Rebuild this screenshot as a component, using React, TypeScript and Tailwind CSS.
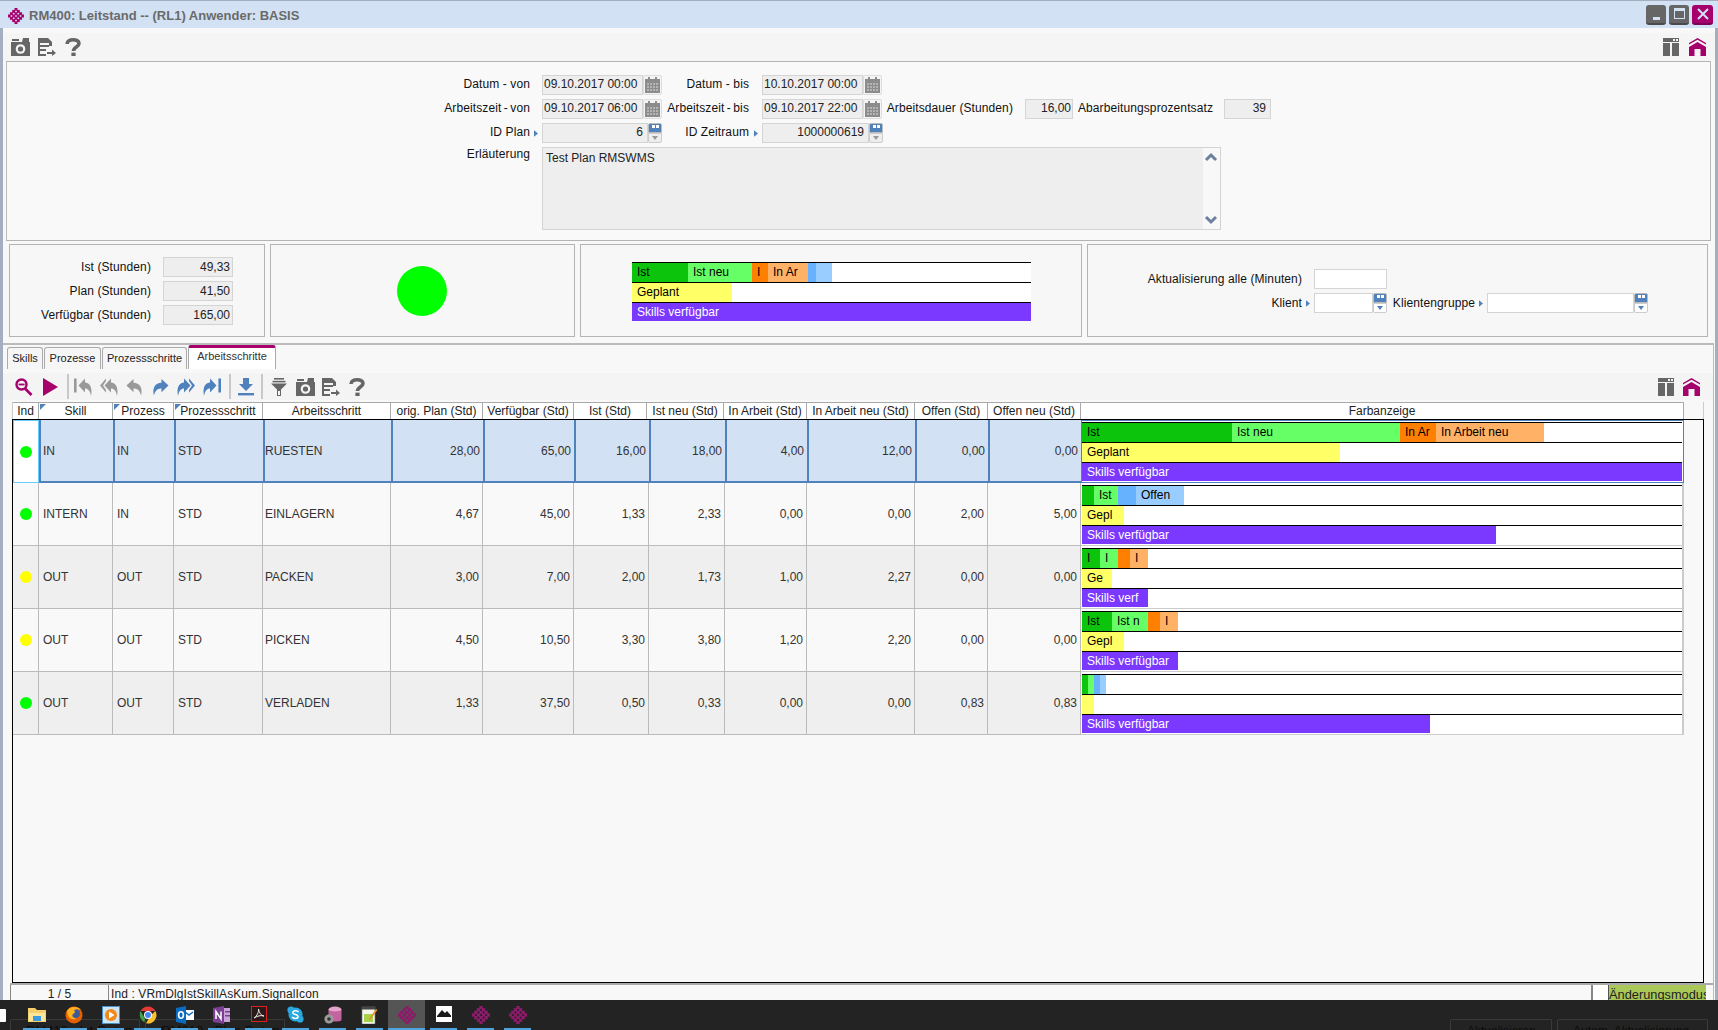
import type { ReactNode } from "react"

const IST = "bg-[#0cc40c]"
const NEU = "bg-[#66ff66]"
const ARB = "bg-[#ff8000]"
const ARBN = "bg-[#ffb266]"
const OFF = "bg-[#66b2ff]"
const OFFN = "bg-[#99ccff]"
const PLAN = "bg-[#ffff66]"

type Seg = [number, string, string]
type Bars = { top: Seg[]; plan: [number, string]; skills: [number, string] }

const panelBars: Bars = {
  top: [[56, IST, "Ist"], [64, NEU, "Ist neu"], [16, ARB, "I"], [40, ARBN, "In Ar"], [8, OFF, ""], [16, OFFN, ""]],
  plan: [100, "Geplant"],
  skills: [399, "Skills verfügbar"],
}

const rows: { color: string; cells: string[]; bars: Bars }[] = [
  {
    color: "bg-[#00ff00]",
    cells: ["IN", "IN", "STD", "RUESTEN", "28,00", "65,00", "16,00", "18,00", "4,00", "12,00", "0,00", "0,00"],
    bars: {
      top: [[150, IST, "Ist"], [168, NEU, "Ist neu"], [36, ARB, "In Ar"], [108, ARBN, "In Arbeit neu"]],
      plan: [258, "Geplant"],
      skills: [600, "Skills verfügbar"],
    },
  },
  {
    color: "bg-[#00ff00]",
    cells: ["INTERN", "IN", "STD", "EINLAGERN", "4,67", "45,00", "1,33", "2,33", "0,00", "0,00", "2,00", "5,00"],
    bars: {
      top: [[12, IST, ""], [24, NEU, "Ist"], [18, OFF, ""], [48, OFFN, "Offen"]],
      plan: [42, "Gepl"],
      skills: [414, "Skills verfügbar"],
    },
  },
  {
    color: "bg-[#ffff00]",
    cells: ["OUT", "OUT", "STD", "PACKEN", "3,00", "7,00", "2,00", "1,73", "1,00", "2,27", "0,00", "0,00"],
    bars: {
      top: [[18, IST, "I"], [18, NEU, "I"], [12, ARB, ""], [18, ARBN, "I"]],
      plan: [30, "Ge"],
      skills: [66, "Skills verf"],
    },
  },
  {
    color: "bg-[#ffff00]",
    cells: ["OUT", "OUT", "STD", "PICKEN", "4,50", "10,50", "3,30", "3,80", "1,20", "2,20", "0,00", "0,00"],
    bars: {
      top: [[30, IST, "Ist"], [36, NEU, "Ist n"], [12, ARB, ""], [18, ARBN, "I"]],
      plan: [42, "Gepl"],
      skills: [96, "Skills verfügbar"],
    },
  },
  {
    color: "bg-[#00ff00]",
    cells: ["OUT", "OUT", "STD", "VERLADEN", "1,33", "37,50", "0,50", "0,33", "0,00", "0,00", "0,83", "0,83"],
    bars: {
      top: [[6, IST, ""], [6, NEU, ""], [6, OFF, ""], [6, OFFN, ""]],
      plan: [12, ""],
      skills: [348, "Skills verfügbar"],
    },
  },
]

const headers: [string, boolean][] = [
  ["Ind", false], ["Skill", true], ["Prozess", true], ["Prozessschritt", true], ["Arbeitsschritt", false],
  ["orig. Plan (Std)", false], ["Verfügbar (Std)", false], ["Ist (Std)", false], ["Ist neu (Std)", false],
  ["In Arbeit (Std)", false], ["In Arbeit neu (Std)", false], ["Offen (Std)", false], ["Offen neu (Std)", false],
  ["Farbanzeige", false],
]

const HEAD_GRID = "grid grid-cols-[26px_74px_61px_89px_128px_92px_91px_73px_77px_83px_108px_73px_93px_603px]"
const ROW_GRID = "grid grid-cols-[26px_74px_61px_89px_128px_92px_91px_75px_76px_82px_108px_73px_93px_603px]"

function Segment({ w, color, label, white }: { w: number; color: string; label: string; white?: boolean }) {
  return (
    <div
      className={`${color} h-full overflow-hidden whitespace-nowrap pl-[5px] text-[12px] leading-[19px] ${white ? "text-white" : "text-black"}`}
      style={{ width: w }}
    >
      {label}
    </div>
  )
}

function Chart({ bars }: { bars: Bars }) {
  return (
    <div className="w-full bg-white">
      <div className="flex h-5 border-t border-black">
        {bars.top.map((s, i) => (
          <Segment key={i} w={s[0]} color={s[1]} label={s[2]} />
        ))}
      </div>
      <div className="flex h-5 border-t border-black">
        <Segment w={bars.plan[0]} color={PLAN} label={bars.plan[1]} />
      </div>
      <div className="flex h-[19px] border-t border-black">
        <Segment w={bars.skills[0]} color="bg-[#7b38ff]" label={bars.skills[1]} white />
      </div>
    </div>
  )
}

function Marker() {
  return (
    <svg width="4" height="7" viewBox="0 0 5 8" className="mt-[7px] shrink-0">
      <path d="M0 0 L5 4 L0 8 Z" fill="#4f81bd" />
    </svg>
  )
}

function Label({ children, className = "", up }: { children: ReactNode; className?: string; up?: boolean }) {
  return (
    <div className={`whitespace-nowrap text-right text-[12px] tracking-[0.1px] text-[#111] ${up ? "leading-[18px]" : "leading-5"} ${className}`}>
      {children}
    </div>
  )
}

function Field({ value, className = "", right, up }: { value?: string; className?: string; right?: boolean; up?: boolean }) {
  return (
    <div
      className={`h-5 shrink-0 overflow-hidden whitespace-nowrap border border-[#d4d4d4] bg-[#eeeeee] px-[1px] text-[12px] text-[#222] ${up ? "leading-[16px]" : "leading-[18px]"} ${right ? "text-right" : ""} ${className}`}
    >
      {value}
    </div>
  )
}

function CalendarBtn() {
  return (
    <div className="flex h-5 w-[19px] shrink-0 items-center justify-center rounded-[2px] border border-[#dddddd] bg-[#f4f4f4]">
      <svg width="15" height="16" viewBox="0 0 15 16">
        <rect x="0" y="2" width="15" height="14" fill="#8c8c8c" />
        <rect x="3" y="0" width="2" height="4" fill="#8c8c8c" />
        <rect x="10" y="0" width="2" height="4" fill="#8c8c8c" />
        {[6, 9, 12].map((y) =>
          [2, 5, 8, 11].map((x) => <rect key={`${x}-${y}`} x={x} y={y} width="2" height="2" fill="#b4b4b4" />)
        )}
      </svg>
    </div>
  )
}

function Spinner({ light }: { light?: boolean }) {
  return (
    <div className="flex h-5 w-[14px] shrink-0 flex-col">
      <div className="flex h-[10px] items-start justify-center gap-[1px] rounded-t-[2px] border border-[#bbbbbb] bg-[#4f81bd] pt-[1px]">
        <div className="h-[3px] w-[3px] bg-white" />
        <div className="h-[3px] w-[3px] bg-white" />
      </div>
      <div className={`flex h-[10px] items-center justify-center rounded-b-[2px] border border-[#cccccc] ${light ? "bg-white" : "bg-[#eeeeee]"}`}>
        <svg width="6" height="4" viewBox="0 0 6 4">
          <path d="M0 0 H6 L3 4 Z" fill={light ? "#4f81bd" : "#999999"} />
        </svg>
      </div>
    </div>
  )
}

function Logo({ size = 16, color = "#a6006d" }: { size?: number; color?: string }) {
  const cells = [
    [3, 0], [2, 1], [4, 1], [1, 2], [3, 2], [5, 2], [0, 3], [2, 3], [4, 3], [6, 3],
    [1, 4], [3, 4], [5, 4], [2, 5], [4, 5], [3, 6],
  ]
  return (
    <svg width={size} height={size} viewBox="0 0 7 7" className="shrink-0">
      {cells.map(([x, y]) => (
        <rect key={`${x}-${y}`} x={x - 0.15} y={y - 0.15} width="1.3" height="1.3" fill={color} />
      ))}
    </svg>
  )
}

function CameraIcon() {
  return (
    <svg width="19" height="18" viewBox="0 0 19 18" className="shrink-0">
      <path d="M0 4 H11 L12 0 H18 V4 H19 V18 H0 Z" fill="#666666" />
      <rect x="1" y="1" width="7" height="2" fill="#666666" />
      <circle cx="9.5" cy="11" r="4.8" fill="#f4f4f4" />
      <circle cx="9.5" cy="11" r="2.6" fill="#666666" />
    </svg>
  )
}

function DocIcon() {
  return (
    <svg width="18" height="18" viewBox="0 0 18 18" className="shrink-0">
      <path d="M0 0 H10 L14 4 V8 H11 V5 H2 V7 H11 V9 H2 V11 H8 V13 H2 V16 H8 V18 H0 Z" fill="#666666" />
      <path d="M9 14 H14 V11.5 L18 15 L14 18 V16 H9 Z" fill="#666666" />
    </svg>
  )
}

function HelpIcon() {
  return (
    <svg width="16" height="18" viewBox="0 0 16 18" className="shrink-0">
      <path d="M2 6 C2 0.5 14 0.5 14 5.5 C14 9 8.5 9 8.5 13" fill="none" stroke="#666666" strokeWidth="3.6" />
      <rect x="6.4" y="14.6" width="4.2" height="3.4" fill="#666666" />
    </svg>
  )
}

function LayoutIcon() {
  return (
    <svg width="16" height="18" viewBox="0 0 16 18" className="shrink-0">
      <rect x="0" y="0" width="16" height="4" fill="#666666" />
      <rect x="10" y="1" width="2" height="2" fill="#f4f4f4" />
      <rect x="13" y="1" width="2" height="2" fill="#f4f4f4" />
      <rect x="0" y="5" width="7" height="13" fill="#666666" />
      <rect x="9" y="5" width="7" height="13" fill="#666666" />
    </svg>
  )
}

function HomeIcon() {
  return (
    <svg width="17" height="18" viewBox="0 0 17 18" className="shrink-0">
      <path d="M0 5 L8.5 0 L17 5 V6.5 L8.5 1.8 L0 6.5 Z" fill="#a6006d" />
      <path d="M0 9 L8.5 4 L17 9 V18 H11.5 V11 H5.5 V18 H0 Z" fill="#a6006d" />
    </svg>
  )
}

function ReplyIcon({ color, flip, bar, double, w = 18 }: { color: string; flip?: boolean; bar?: boolean; double?: boolean; w?: number }) {
  let main = "M8 0.5 L0.5 7.5 L8 14.5 V10.5 C12 10.5 14.5 12.5 16 18 C18 10 14.5 4.5 8 4.5 Z"
  if (double || bar) main = "M11 0.5 L4.5 7.5 L11 14.5 V10.5 C14 10.5 16 12.5 17 18 C18.6 10 16 4.5 11 4.5 Z"
  return (
    <svg width={w} height="18" viewBox="0 0 18 18" className={`shrink-0 ${flip ? "-scale-x-100" : ""}`}>
      {double && <path d="M6 0.5 L0 7.5 L6 14.5 V12 L3 7.5 L6 3 Z" fill={color} />}
      {bar && <rect x="0" y="0.5" width="2.6" height="14" fill={color} />}
      <path d={main} fill={color} />
    </svg>
  )
}

function ToolSep({ className = "" }: { className?: string }) {
  return <div className={`h-[25px] w-[2px] shrink-0 bg-[#c8c8c8] ${className}`} />
}

function FormPanel() {
  return (
    <div className="ml-[3px] h-[180px] w-[1705px] border-x border-y border-x-[#bbbbbb] border-y-[#b4b4b4] bg-[#f9f9f9] pt-[13px]">
      <div className="flex flex-col gap-1">
        <div className="flex h-5">
          <Label up className="w-[523px]">Datum - von</Label>
          <div className="w-3" />
          <Field up value="09.10.2017 00:00" className="w-[101px]" />
          <CalendarBtn />
          <Label up className="w-[87px]">Datum - bis</Label>
          <div className="w-[13px]" />
          <Field up value="10.10.2017 00:00" className="w-[101px]" />
          <CalendarBtn />
        </div>
        <div className="flex h-5">
          <Label up className="w-[523px] [word-spacing:-1px]">Arbeitszeit - von</Label>
          <div className="w-3" />
          <Field up value="09.10.2017 06:00" className="w-[101px]" />
          <CalendarBtn />
          <Label up className="w-[87px] [word-spacing:-1px]">Arbeitszeit - bis</Label>
          <div className="w-[13px]" />
          <Field up value="09.10.2017 22:00" className="w-[101px]" />
          <CalendarBtn />
          <Label up className="ml-[2px] w-[129px] text-left">Arbeitsdauer (Stunden)</Label>
          <Field up value="16,00" right className="ml-3 w-12" />
          <Label up className="ml-[2px] w-[138px] text-left">Abarbeitungsprozentsatz</Label>
          <Field up value="39" right className="ml-[11px] w-[47px] pr-1" />
        </div>
        <div className="flex h-5">
          <Label up className="w-[523px]">ID Plan</Label>
          <div className="flex w-3 justify-center">
            <Marker />
          </div>
          <Field up value="6" right className="w-[106px] pr-1" />
          <Spinner />
          <Label up className="w-[87px]">ID Zeitraum</Label>
          <div className="flex w-[13px] justify-center">
            <Marker />
          </div>
          <Field up value="1000000619" right className="w-[107px] pr-1" />
          <Spinner />
        </div>
        <div className="flex">
          <div className="w-[523px] text-right text-[12px] leading-[14px] tracking-[0.1px] text-[#111]">Erläuterung</div>
          <div className="w-3" />
          <div className="flex h-[83px] w-[679px] border border-[#d4d4d4] bg-[#eeeeee]">
            <div className="flex-1 px-[3px] pt-[1px] text-[12px] leading-[18px] text-[#222]">Test Plan RMSWMS</div>
            <div className="flex w-[17px] flex-col justify-between bg-[#f8f8f8] py-[3px]">
              <svg width="16" height="12" viewBox="0 0 16 12">
                <path d="M3 9 L8 4 L13 9" fill="none" stroke="#6b7f9e" strokeWidth="3" />
              </svg>
              <svg width="16" height="12" viewBox="0 0 16 12">
                <path d="M3 3 L8 8 L13 3" fill="none" stroke="#6b7f9e" strokeWidth="3" />
              </svg>
            </div>
          </div>
        </div>
      </div>
    </div>
  )
}

function SummaryPanels() {
  const box = "h-[93px] border border-[#b4b4b4] bg-[#f7f7f7]"
  return (
    <div className="ml-[6px] mt-[3px] flex gap-[5px]">
      <div className={`${box} flex w-[256px] flex-col gap-1 pt-3`}>
        {[["Ist (Stunden)", "49,33"], ["Plan (Stunden)", "41,50"], ["Verfügbar (Stunden)", "165,00"]].map(([l, v]) => (
          <div key={l} className="flex h-5">
            <Label className="w-[141px]">{l}</Label>
            <Field value={v} right className="ml-3 w-[70px] pr-[2px]" />
          </div>
        ))}
      </div>
      <div className={`${box} flex w-[305px] items-center justify-center pr-[2px]`}>
        <div className="h-[50px] w-[50px] rounded-full bg-[#00ff00]" />
      </div>
      <div className={`${box} w-[502px] pl-[51px] pt-[17px]`}>
        <div className="w-[399px]">
          <Chart bars={panelBars} />
        </div>
      </div>
      <div className={`${box} flex w-[621px] flex-col gap-1 pt-6`}>
        <div className="flex h-5">
          <Label className="w-[214px]">Aktualisierung alle (Minuten)</Label>
          <div className="w-3" />
          <div className="h-5 w-[73px] border border-[#d4d4d4] bg-white" />
        </div>
        <div className="flex h-5">
          <Label className="w-[214px]">Klient</Label>
          <div className="flex w-3 justify-center">
            <Marker />
          </div>
          <div className="h-5 w-[59px] border border-[#d4d4d4] bg-white" />
          <Spinner light />
          <Label className="ml-1 w-[84px]">Klientengruppe</Label>
          <div className="flex w-3 justify-center">
            <Marker />
          </div>
          <div className="h-5 w-[147px] border border-[#d4d4d4] bg-white" />
          <Spinner light />
        </div>
      </div>
    </div>
  )
}

function Tabs() {
  const tab = "flex h-[22px] items-center justify-center rounded-t-[3px] border-x border-t border-[#aaaaaa] bg-[#f6f6f6] text-[11px] text-[#222]"
  return (
    <div className="ml-1 flex h-6 items-end gap-px">
      <div className={`${tab} w-9`}>Skills</div>
      <div className={`${tab} w-[57px]`}>Prozesse</div>
      <div className={`${tab} w-[85px]`}>Prozessschritte</div>
      <div className="flex h-6 w-[88px] items-start justify-center rounded-t-[3px] border-x border-[#aaaaaa] border-t-[3px] border-t-[#a6006d] bg-white pt-[1px] text-[11px] leading-[14px] text-[#333]">
        Arbeitsschritte
      </div>
    </div>
  )
}

function TableToolbar() {
  const blue = "#4f81bd"
  const gray = "#999999"
  return (
    <div className="mt-1 flex h-[27px] items-center bg-[#f4f4f4] pl-[12px]">
      <svg width="18" height="18" viewBox="0 0 18 18" className="shrink-0">
        <circle cx="6.5" cy="6.5" r="5" fill="none" stroke="#a6006d" strokeWidth="2.4" />
        <rect x="3.6" y="5.6" width="6" height="1.8" fill="#a6006d" />
        <path d="M10 10.5 L16.5 17" stroke="#a6006d" strokeWidth="2.6" />
      </svg>
      <svg width="15" height="18" viewBox="0 0 15 18" className="ml-[10px] shrink-0">
        <path d="M0 0 L15 9 L0 18 Z" fill="#a6006d" />
      </svg>
      <ToolSep className="ml-[9px]" />
      <div className="ml-[5px] shrink-0">
        <ReplyIcon color={gray} bar />
      </div>
      <div className="ml-2 shrink-0">
        <ReplyIcon color={gray} double />
      </div>
      <div className="ml-2 shrink-0">
        <ReplyIcon color={gray} w={17} />
      </div>
      <div className="ml-[9px] shrink-0">
        <ReplyIcon color={blue} flip w={17} />
      </div>
      <div className="ml-2 shrink-0">
        <ReplyIcon color={blue} flip double />
      </div>
      <div className="ml-2 shrink-0">
        <ReplyIcon color={blue} flip bar />
      </div>
      <ToolSep className="ml-2" />
      <svg width="16" height="18" viewBox="0 0 16 18" className="ml-[7px] shrink-0">
        <path d="M5 0 H11 V6 H15 L8 13 L1 6 H5 Z" fill={blue} />
        <rect x="0" y="15" width="16" height="2.4" fill={blue} />
      </svg>
      <ToolSep className="ml-[7px]" />
      <svg width="16" height="18" viewBox="0 0 16 18" className="ml-2 shrink-0">
        <rect x="3" y="0" width="10" height="1.6" fill="#666666" />
        <rect x="1.5" y="2.8" width="13" height="1.6" fill="#666666" />
        <path d="M0 5.6 H16 L10 11.5 V18 H6 V11.5 Z" fill="#666666" />
        <rect x="7" y="13" width="2" height="4" fill="#f4f4f4" />
      </svg>
      <div className="ml-[9px] shrink-0">
        <CameraIcon />
      </div>
      <div className="ml-[7px] shrink-0">
        <DocIcon />
      </div>
      <div className="ml-[9px] shrink-0">
        <HelpIcon />
      </div>
      <div className="ml-auto mr-[13px] flex items-center gap-[9px]">
        <LayoutIcon />
        <HomeIcon />
      </div>
    </div>
  )
}

function Table() {
  return (
    <div className="ml-[9px] mt-[2px]">
      <div className="w-[1692px] border-x border-[#cccccc]">
        <div className={`${HEAD_GRID} h-[17px] w-[1671px]`}>
          {headers.map(([h, mark]) => (
            <div
              key={h}
              className="relative overflow-hidden whitespace-nowrap border-r border-t border-[#aaaaaa] bg-white text-center text-[12px] leading-[16px] text-[#222]"
            >
              {mark && (
                <svg width="6" height="6" viewBox="0 0 6 6" className="absolute left-[1px] top-[1px]">
                  <path d="M0 0 H6 L0 6 Z" fill="#4f81bd" />
                </svg>
              )}
              {h}
            </div>
          ))}
        </div>
      </div>
      <div className="h-[564px] w-[1692px] border border-black bg-[#f8f8f8]">
        {rows.map((r, i) => {
          const sel = i === 0
          const cellCls = sel
            ? "border-l-2 border-b-2 border-[#4f81bd] bg-[#d2e1f3] pt-px"
            : `border-r border-b border-[#bbbbbb] ${i % 2 === 1 ? "bg-[#f9f9f9]" : "bg-[#efefef]"}`
          return (
            <div key={i} className={`${ROW_GRID} h-[63px] w-[1671px]`}>
              <div className={`flex items-center justify-center ${sel ? "border border-[#66ccff] bg-white" : cellCls}`}>
                <div className={`h-3 w-3 rounded-full ${r.color}`} />
              </div>
              {r.cells.map((c, j) => {
                let pad = "justify-end pr-[3px]"
                if (j <= 3) {
                  if (sel) pad = j === 3 ? "" : "pl-[2px]"
                  else pad = j === 3 ? "pl-[2px]" : "pl-[4px]"
                }
                return (
                  <div
                    key={j}
                    className={`flex items-center overflow-hidden whitespace-nowrap text-[12px] text-[#333] ${cellCls} ${pad}`}
                  >
                    {c}
                  </div>
                )
              })}
              <div
                className={`bg-white ${sel ? "border border-[#4f81bd] pt-px" : "border-b border-r-2 border-[#cccccc] pl-px pt-[2px]"}`}
              >
                <div className="w-[600px]">
                  <Chart bars={r.bars} />
                </div>
              </div>
            </div>
          )
        })}
      </div>
    </div>
  )
}

function StatusBar() {
  return (
    <div className="ml-[7px] flex h-[17px] border-t-2 border-[#aaaaaa] text-[12px] leading-[19px] text-[#222]">
      <div className="w-[99px] border-x border-[#888888] text-center">1 / 5</div>
      <div className="w-[1482px] overflow-hidden whitespace-nowrap pl-[2px] tracking-[0.1px]">Ind : VRmDlgIstSkillAsKum.SignalIcon</div>
      <div className="w-[17px] border-l-2 border-[#888888] bg-white" />
      <div className="w-[98px] overflow-hidden whitespace-nowrap border-l border-[#555555] bg-[#a9c858] text-[12.8px]">
        Änderungsmodus
      </div>
    </div>
  )
}

function TaskIcon({ children, active, line = true }: { children: ReactNode; active?: boolean; line?: boolean }) {
  return (
    <div className={`relative flex h-[30px] w-[37px] shrink-0 items-start justify-center pt-[6px] ${active ? "bg-[#555555]" : ""}`}>
      {children}
      {line && <div className={`absolute bottom-0 h-[2px] bg-[#4fa3dc] ${active ? "left-0 right-0" : "left-[5px] right-[5px]"}`} />}
    </div>
  )
}

function Taskbar() {
  return (
    <div className="relative flex h-[30px] w-[1718px] overflow-hidden bg-[#232323] font-['Liberation_Sans',sans-serif]">
      <div className="absolute bottom-0 left-[10px] top-[19px] w-[130px] rounded-t-[2px] border-x border-t border-[#3a3a3a]" />
      <div className="absolute bottom-0 left-[145px] top-[19px] w-[140px] rounded-t-[2px] border-x border-t border-[#3a3a3a]" />
      <div className="absolute bottom-0 left-[1450px] top-[19px] w-[102px] rounded-t-[2px] border-x border-t border-[#3a3a3a]" />
      <div className="absolute bottom-0 left-[1557px] top-[19px] w-[151px] rounded-t-[2px] border-x border-t border-[#3a3a3a]" />
      <div className="absolute left-[26px] top-[23px] text-[13px] leading-4 text-[#0c0c0c]">RM410 - Ist-Daten</div>
      <div className="absolute left-[161px] top-[23px] text-[13px] leading-4 text-[#0c0c0c]">RM210 - Plan-Daten</div>
      <div className="absolute left-[1467px] top-[23px] text-[12px] leading-4 text-[#0c0c0c]">Aktualisieren</div>
      <div className="absolute left-[1573px] top-[23px] text-[12px] leading-4 text-[#0c0c0c]">Autom. Aktualisierung</div>

      <div className="relative flex">
        <div className="flex h-[30px] w-[18px] items-start pt-[9px]">
          <div className="h-[13px] w-[6px] rounded-r-[1px] bg-white" />
        </div>
        <TaskIcon>
          <svg width="18" height="18" viewBox="0 0 18 18">
            <path d="M0 2 H7 L9 4 H18 V16 H0 Z" fill="#f5cf6b" />
            <path d="M1 7 H17 V15 H1 Z" fill="#fbe59a" />
            <path d="M5 15 V10 H13 V15 Z" fill="#3a9be0" />
          </svg>
        </TaskIcon>
        <TaskIcon>
          <svg width="18" height="18" viewBox="0 0 18 18">
            <circle cx="9" cy="9" r="8.5" fill="#e66000" />
            <circle cx="10" cy="7.5" r="5" fill="#3f5a99" />
            <path d="M2 5 C5 0 13 0 16 4 C13 3 11 3 9 4 C11 6 9 8 8 8 C6 10 9 13 12 12 C10 14 5 14 3 10 Z" fill="#ffb01f" />
          </svg>
        </TaskIcon>
        <TaskIcon>
          <svg width="18" height="18" viewBox="0 0 18 18">
            <rect x="0.5" y="0.5" width="17" height="17" fill="#cfe4f5" stroke="#4a90c8" />
            <circle cx="9" cy="9" r="6" fill="#f08a1c" />
            <path d="M7 5.5 L12.5 9 L7 12.5 Z" fill="#ffffff" />
          </svg>
        </TaskIcon>
        <TaskIcon>
          <svg width="18" height="18" viewBox="0 0 18 18">
            <path d="M9 0.5 A8.5 8.5 0 0 1 16.4 5 H9 Z" fill="#e53935" />
            <path d="M1.6 5 A8.5 8.5 0 0 1 9 0.5 V5 Z" fill="#e53935" />
            <path d="M1.6 5 L6 12.5 L5.5 16.4 A8.5 8.5 0 0 1 1.6 5 Z" fill="#43a047" />
            <path d="M16.4 5 A8.5 8.5 0 0 1 7 17.3 L12 9 Z" fill="#fbc02d" />
            <circle cx="9" cy="9" r="4" fill="#ffffff" />
            <circle cx="9" cy="9" r="3" fill="#4285f4" />
          </svg>
        </TaskIcon>
        <TaskIcon>
          <svg width="18" height="18" viewBox="0 0 18 18">
            <rect x="8" y="4" width="10" height="10" fill="#ffffff" />
            <path d="M9 6 L13 9 L17 6" fill="none" stroke="#0a6cc0" strokeWidth="1.4" />
            <path d="M0 2 L10 0 V18 L0 16 Z" fill="#0a6cc0" />
            <ellipse cx="5" cy="9" rx="2.4" ry="3.2" fill="none" stroke="#ffffff" strokeWidth="1.6" />
          </svg>
        </TaskIcon>
        <TaskIcon>
          <svg width="18" height="18" viewBox="0 0 18 18">
            <rect x="10" y="2" width="7" height="14" fill="#c9a2d8" />
            <rect x="12" y="5" width="5" height="1.5" fill="#7a3f93" />
            <rect x="12" y="9" width="5" height="1.5" fill="#7a3f93" />
            <path d="M0 2 L11 0 V18 L0 16 Z" fill="#7a3f93" />
            <path d="M3 13 V5.5 L8 13 V5.5" fill="none" stroke="#ffffff" strokeWidth="1.5" />
          </svg>
        </TaskIcon>
        <TaskIcon>
          <svg width="16" height="16" viewBox="0 0 16 16">
            <rect x="0.5" y="0.5" width="15" height="15" fill="#2a1a1a" stroke="#d8231f" />
            <path d="M3 12 C6 10 8 6 7.5 3 C8 6 10 10 13 10 C10 9 6 10 3 12 Z" fill="none" stroke="#f0f0f0" strokeWidth="1" />
          </svg>
        </TaskIcon>
        <TaskIcon>
          <svg width="17" height="17" viewBox="0 0 17 17">
            <circle cx="8.5" cy="8.5" r="7" fill="#2aa9e0" />
            <circle cx="4" cy="4" r="3.6" fill="#2aa9e0" />
            <circle cx="13" cy="13" r="3.6" fill="#2aa9e0" />
            <path d="M11.5 6 C10 4 5.5 4.5 6 7 C6.5 9 11 8 11 10.5 C11 13 6.5 13 5.2 11" fill="none" stroke="#ffffff" strokeWidth="1.6" />
          </svg>
        </TaskIcon>
        <TaskIcon>
          <svg width="18" height="18" viewBox="0 0 18 18">
            <ellipse cx="11" cy="3.5" rx="6.5" ry="3" fill="#e7a3cb" />
            <path d="M4.5 3.5 V14 C4.5 16 17.5 16 17.5 14 V3.5 C17.5 6 4.5 6 4.5 3.5 Z" fill="#c2659f" />
            <circle cx="5" cy="13" r="4.6" fill="#9a9a9a" />
            <circle cx="5" cy="13" r="1.8" fill="#333333" />
          </svg>
        </TaskIcon>
        <TaskIcon>
          <svg width="17" height="18" viewBox="0 0 17 18">
            <rect x="1" y="1" width="13" height="17" fill="#f4f4e8" stroke="#777777" strokeWidth="0.6" />
            <rect x="1" y="1" width="13" height="2.5" fill="#444444" />
            <rect x="3" y="8" width="9" height="8" fill="#a5d24a" />
            <path d="M8 13 L15 3 L16.5 4 L9 14 Z" fill="#e88f2a" />
          </svg>
        </TaskIcon>
        <TaskIcon active>
          <Logo size={18} color="#8e1a6c" />
        </TaskIcon>
        <TaskIcon>
          <svg width="16" height="16" viewBox="0 0 16 16">
            <rect x="0" y="0" width="16" height="16" fill="#ffffff" />
            <path d="M1 10 L6 4 L9 7 L11 5 L15 9.5 L15 11 L1 11 Z" fill="#1a1a1a" />
          </svg>
        </TaskIcon>
        <TaskIcon>
          <Logo size={18} color="#8e1a6c" />
        </TaskIcon>
        <TaskIcon>
          <Logo size={18} color="#8e1a6c" />
        </TaskIcon>
      </div>
    </div>
  )
}

export default function App() {
  return (
    <div className="h-[1030px] w-[1718px] overflow-hidden bg-[#f8f8f8] font-['Liberation_Sans',Arial,sans-serif]">
      {/* Titelleiste */}
      <div className="flex h-[28px] items-center border-t border-[#a3afc0] bg-[#d2e1f3] pl-2">
        <div className="mt-[2px]">
          <Logo size={16} />
        </div>
        <div className="ml-[5px] mt-[3px] whitespace-nowrap text-[13px] font-bold text-[#6a6a6a]">
          RM400: Leitstand -- (RL1) Anwender: BASIS
        </div>
        <div className="ml-auto mr-[5px] flex gap-[3px]">
          <div className="flex h-5 w-5 items-end justify-center rounded-[3px] border-b-2 border-[#4a4a4a] bg-[#666666] pb-[3px]">
            <div className="h-[3px] w-[7px] bg-[#d2e1f3]" />
          </div>
          <div className="flex h-5 w-5 items-center justify-center rounded-[3px] border-b-2 border-[#4a4a4a] bg-[#666666]">
            <div className="h-[11px] w-[11px] border border-t-[3px] border-[#d2e1f3]" />
          </div>
          <div className="flex h-5 w-[21px] items-center justify-center rounded-[3px] border-b-2 border-[#7e0052] bg-[#a6006d]">
            <svg width="12" height="12" viewBox="0 0 12 12">
              <path d="M1 1 L11 11 M11 1 L1 11" stroke="#d2e1f3" strokeWidth="2" />
            </svg>
          </div>
        </div>
      </div>

      <div className="h-[972px] w-[1718px] overflow-hidden border-x-[3px] border-[#a3afc0] pt-[5px]">
        {/* Werkzeugleiste oben */}
        <div className="flex h-7 items-center bg-[#f5f5f5] pl-[8px] pr-[9px]">
          <CameraIcon />
          <div className="ml-2">
            <DocIcon />
          </div>
          <div className="ml-[9px]">
            <HelpIcon />
          </div>
          <div className="ml-auto flex items-center gap-[10px]">
            <LayoutIcon />
            <HomeIcon />
          </div>
        </div>

        <FormPanel />
        <SummaryPanels />

        {/* Registerkarten und Tabelle */}
        <div className="mt-[6px] w-[1711px] border-r border-t-2 border-[#bbbbbb]">
          <Tabs />
          <TableToolbar />
          <Table />
          <StatusBar />
        </div>
      </div>

      <Taskbar />
    </div>
  )
}
